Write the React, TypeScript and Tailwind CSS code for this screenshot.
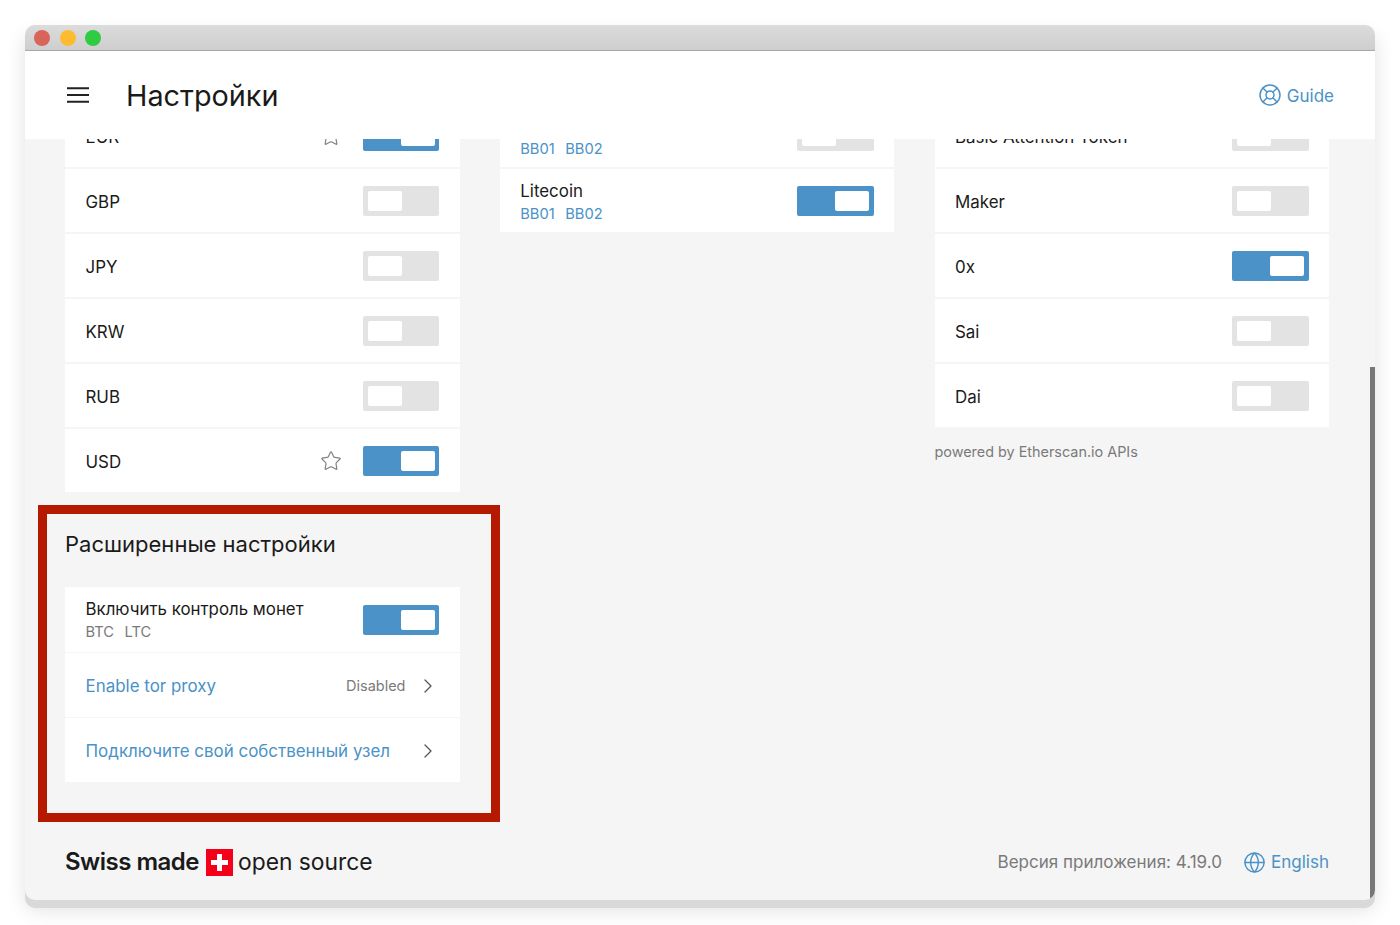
import React from 'react';
import { ChevronRight, Globe, LifeBuoy, Star } from 'lucide-react';

const Toggle: React.FC<{ on?: boolean }> = ({ on }) => (
    <div className={`w-[76.5px] h-[30px] rounded-[2px] flex items-center shrink-0 ${on ? 'bg-[#4a92c7] justify-end pr-[4.5px]' : 'bg-[#e3e3e3] justify-start pl-[5px]'}`}>
        <div className="w-[34px] h-[20px] rounded-[2px] bg-white" />
    </div>
);

const Row: React.FC<{ name: string; on?: boolean; star?: boolean; tags?: string[]; last?: boolean }> = ({ name, on, star, tags, last }) => (
    <div className={`px-[20.5px] flex items-center justify-between ${last ? 'h-[63px]' : 'h-[65px] border-b-2 border-[#f5f5f5]'}`}>
        <div className="pt-[2px]">
            <p className="text-[16.9px] leading-[22px] text-[#1a1a1a]">{name}</p>
            {tags && (
                <div className="flex gap-[10.5px] text-[14.7px] leading-[20px] mt-[2px] text-[#4a92c7]">
                    {tags.map(t => <span key={t}>{t}</span>)}
                </div>
            )}
        </div>
        <div className="flex items-center gap-[21px]">
            {star && <Star size={22} strokeWidth={1.3} className="text-[#808080]" />}
            <Toggle on={on} />
        </div>
    </div>
);

const LinkRow: React.FC<{ label: string; value?: string; last?: boolean }> = ({ label, value, last }) => (
    <div className={`pl-[20.5px] pr-[20px] flex items-center justify-between ${last ? 'h-[64px]' : 'h-[65px] border-b border-[#f5f5f5]'}`}>
        <span className="pt-[4px] text-[16.95px] text-[#4a92c7]">{label}</span>
        <div className="pt-[2px] flex items-center gap-[10px]">
            {value && <span className="text-[14.5px] text-[#7a7a7a]">{value}</span>}
            <ChevronRight size={24} strokeWidth={1.3} className="text-[#555]" />
        </div>
    </div>
);

export default function App() {
    return (
        <div className="w-[1400px] h-[925px] bg-white p-[25px] overflow-hidden font-['Inter',sans-serif]">
            <div className="relative w-[1350px] h-[875px] rounded-[10px] overflow-hidden flex flex-col bg-[#f5f5f5] shadow-[0_8px_0_#d9d9d9,0_10px_20px_rgba(0,0,0,0.12)]">
                <div className="h-[26px] shrink-0 flex items-center gap-[9.5px] pl-[9px] bg-gradient-to-b from-[#dcdcdc] to-[#cecece] border-b border-[#a8a8a8]">
                    <span className="w-[16px] h-[16px] rounded-full bg-[#d9645a]" />
                    <span className="w-[16px] h-[16px] rounded-full bg-[#fdbc2f]" />
                    <span className="w-[16px] h-[16px] rounded-full bg-[#2ecb43]" />
                </div>

                <header className="relative z-10 h-[88px] shrink-0 bg-white flex items-center justify-between pl-[42px] pr-[41px]">
                    <div className="flex items-center gap-[37px]">
                        <svg width="22" height="16" viewBox="0 0 22 16" className="text-[#222]">
                            <path d="M0 1.2h22M0 8h22M0 14.8h22" stroke="currentColor" strokeWidth="2" />
                        </svg>
                        <h1 className="pt-[2px] text-[28.8px] font-normal text-[#1a1a1a]">Настройки</h1>
                    </div>
                    <div className="flex items-center gap-[5px] text-[17px] text-[#4a92c7]">
                        <LifeBuoy size={24} strokeWidth={1.5} />
                        <span className="pt-[3px]">Guide</span>
                    </div>
                </header>

                <main className="flex-1 min-h-0 overflow-hidden px-[40px] flex gap-[40.25px]">
                    <section className="w-[394.5px] shrink-0 -mt-[35px]">
                        <div className="bg-white">
                            <Row name="EUR" star on />
                            <Row name="GBP" />
                            <Row name="JPY" />
                            <Row name="KRW" />
                            <Row name="RUB" />
                            <Row name="USD" star on last />
                        </div>
                        <h2 className="mt-[36px] h-[32px] text-[22px] leading-[32px] font-normal text-[#1a1a1a]">Расширенные настройки</h2>
                        <div className="mt-[27px] bg-white">
                            <div className="h-[66px] px-[20.5px] flex items-center justify-between border-b border-[#f5f5f5]">
                                <div>
                                    <p className="text-[16.85px] leading-[22px] text-[#1a1a1a]">Включить контроль монет</p>
                                    <div className="flex gap-[10.5px] text-[14.7px] leading-[20px] mt-[2px] text-[#7a7a7a]">
                                        <span>BTC</span>
                                        <span>LTC</span>
                                    </div>
                                </div>
                                <Toggle on />
                            </div>
                            <LinkRow label="Enable tor proxy" value="Disabled" />
                            <LinkRow label="Подключите свой собственный узел" last />
                        </div>
                    </section>

                    <section className="w-[394.5px] shrink-0 -mt-[35px]">
                        <div className="bg-white">
                            <Row name="Bitcoin" tags={['BB01', 'BB02']} />
                            <Row name="Litecoin" tags={['BB01', 'BB02']} on last />
                        </div>
                    </section>

                    <section className="w-[394.5px] shrink-0 -mt-[35px]">
                        <div className="bg-white">
                            <Row name="Basic Attention Token" />
                            <Row name="Maker" />
                            <Row name="0x" on />
                            <Row name="Sai" />
                            <Row name="Dai" last />
                        </div>
                        <p className="mt-[15px] text-[14.4px] leading-[20px] text-[#7a7a7a]">powered by Etherscan.io APIs</p>
                    </section>
                </main>

                <footer className="h-[76px] shrink-0 pl-[40px] pr-[46px] flex items-center justify-between">
                    <div className="flex items-center text-[#1a1a1a]">
                        <span className="text-[24px] font-semibold tracking-[-0.5px]">Swiss made</span>
                        <svg width="27" height="27" viewBox="0 0 27 27" className="ml-[7px] mr-[5px]">
                            <rect width="27" height="27" fill="#f4001a" />
                            <path d="M11 5h5v6h6v5h-6v6h-5v-6H5v-5h6z" fill="#fff" />
                        </svg>
                        <span className="text-[22.8px]">open source</span>
                    </div>
                    <div className="flex items-center text-[17.05px]">
                        <span className="text-[#7a7a7a]">Версия приложения: 4.19.0</span>
                        <Globe size={23} strokeWidth={1.5} className="ml-[21px] mr-[5px] text-[#4a92c7]" />
                        <span className="text-[#4a92c7]">English</span>
                    </div>
                </footer>

                {/* scrollbar and the red highlight sit over the page */}
                <div className="absolute right-0 bottom-0 w-[5px] h-[533px] bg-[#777]" />
                <div className="absolute left-[13px] top-[480px] w-[462px] h-[317px] border-[9px] border-[#b51a00]" />
            </div>
        </div>
    );
}
